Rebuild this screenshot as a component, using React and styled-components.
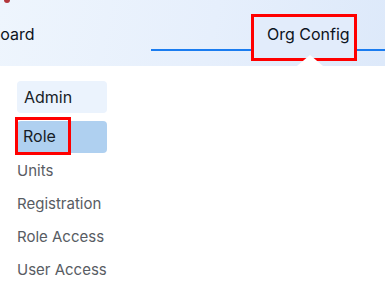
import React from "react";
import styled, { createGlobalStyle } from "styled-components";

const GlobalStyle = createGlobalStyle`
  html, body {
    margin: 0;
    padding: 0;
    background: #ffffff;
    overflow: hidden;
  }
  body {
    font-family: Inter, "Noto Sans", "Liberation Sans", sans-serif;
  }
`;

const Page = styled.div`
  width: 385px;
  height: 290px;
  overflow: hidden;
  background: #fff;
`;

const Header = styled.header`
  position: relative;
  height: 66px;
  display: flex;
  align-items: flex-start;
  background: linear-gradient(100deg, #eef5fd 0%, #e6effc 55%, #dde9fa 100%);
`;

const Badge = styled.span`
  position: absolute;
  left: 4px;
  top: -3px;
  width: 6px;
  height: 6px;
  border-radius: 50%;
  background: #b2363b;
`;

/* the strip is scrolled a little to the left, so the first tab is cut */
const TabStrip = styled.nav`
  display: flex;
  align-items: flex-start;
  margin-left: -48px;
  flex: 1;
`;

const Tab = styled.div`
  font-size: 16px;
  color: #0c1320;
  padding-top: 24px;
  white-space: nowrap;
`;

const ActiveGroup = styled.div`
  flex: 1;
  height: 49px;
  margin-left: 116px;
  border-bottom: 2px solid #1a7cf0;
  display: flex;
  justify-content: flex-end;
  align-items: flex-start;
  padding-right: 31px;
`;

const ActiveTab = styled.div`
  position: relative;
  z-index: 1;
  margin-top: 17px;
  width: 100px;
  height: 41px;
  box-sizing: border-box;
  padding: 7px 0 0 13px;
  font-size: 16px;
  color: #0c1320;
  white-space: nowrap;
  background: #e2ecfb;
  outline: 3px solid #ff0000;
`;

const Pointer = styled.span`
  position: absolute;
  left: 43px;
  bottom: -8px;
  width: 0;
  height: 0;
  border-left: 13px solid transparent;
  border-right: 13px solid transparent;
  border-bottom: 11px solid #ffffff;
`;

const Sidebar = styled.aside`
  display: flex;
  flex-direction: column;
  align-items: flex-start;
  padding: 15px 0 0 17px;
`;

const Item = styled.div`
  width: 90px;
  height: 32px;
  box-sizing: border-box;
  display: flex;
  align-items: center;
  font-size: ${(p) => (p.$variant ? "16px" : "15px")};
  white-space: nowrap;
  border-radius: 4px;
  margin-bottom: ${(p) => (p.$variant === "head" ? "8px" : "1px")};
  padding-left: ${(p) => (p.$variant === "head" ? "7px" : "0")};
  color: ${(p) => (p.$variant ? "#161c26" : "#585c63")};
  background: ${(p) =>
    p.$variant === "head"
      ? "#ebf3fd"
      : p.$variant === "active"
      ? "#afd0f0"
      : "transparent"};
`;

const Marker = styled.span`
  align-self: stretch;
  display: flex;
  align-items: center;
  width: 50px;
  box-sizing: border-box;
  margin: -1px 0 1px 1px;
  padding-left: 5px;
  outline: 3px solid #ff0000;
`;

const menu = ["Units", "Registration", "Role Access", "User Access"];

export default function App() {
  return (
    <Page>
      <GlobalStyle />
      <Header>
        <Badge />
        <TabStrip>
          <Tab>Dashboard</Tab>
          <ActiveGroup>
            <ActiveTab>
              Org Config
              <Pointer />
            </ActiveTab>
          </ActiveGroup>
        </TabStrip>
      </Header>
      <Sidebar>
        <Item $variant="head">Admin</Item>
        <Item $variant="active">
          <Marker>Role</Marker>
        </Item>
        {menu.map((m) => (
          <Item key={m}>{m}</Item>
        ))}
      </Sidebar>
    </Page>
  );
}
